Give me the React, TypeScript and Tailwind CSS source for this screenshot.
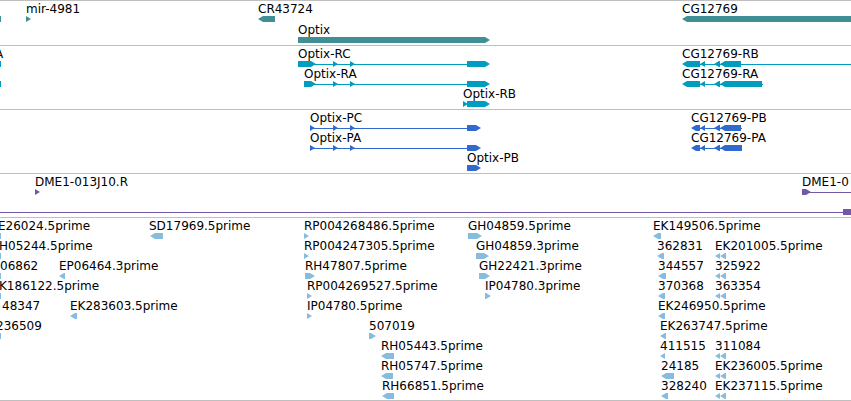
type Dir = "left" | "right" | "none";

interface Block {
  start: number;
  end: number;
  dir: Dir;
}

interface Feature {
  name?: string;
  x?: number;
  blocks: Block[];
  line?: [number, number | "100%"];
}

interface Track {
  id: string;
  title: string;
  fill: string;
  rowsClass: string;
  rows: Feature[][];
}

const right = (start: number, end: number): Block => ({ start, end, dir: "right" });
const left = (start: number, end: number): Block => ({ start, end, dir: "left" });
const box = (start: number, end: number): Block => ({ start, end, dir: "none" });

const feature = (
  name: string | undefined,
  x: number,
  blocks: Block[],
  line?: [number, number | "100%"],
): Feature => ({ name, x, blocks, line });

const edge = box(0, 1);
const pair = [left(715, 720), left(720, 726)];

/* Shapes that run past the right side of the window end here. */
const FAR = 4000;

const tracks: Track[] = [
  {
    id: "gene",
    title: "Genes",
    fill: "fill-[#408f94]",
    rowsClass: "gap-px pb-[3px]",
    rows: [
      [
        feature(undefined, 0, [edge]),
        feature("mir-4981", 26, [right(26, 31)]),
        feature("CR43724", 258, [left(258, 275)]),
        feature("CG12769", 682, [left(682, FAR)]),
      ],
      [feature("Optix", 298, [right(298, 490)])],
    ],
  },
  {
    id: "transcript",
    title: "Transcripts",
    fill: "fill-[#009dbf]",
    rowsClass: "pb-[3px]",
    rows: [
      [
        feature("A", -5, [edge]),
        feature("Optix-RC", 298, [right(298, 316), right(333, 338), right(350, 355), right(467, 490)], [310, 467]),
        feature("CG12769-RB", 682, [left(682, 700), left(700, 705), left(714, 720), left(720, 741)], [700, "100%"]),
      ],
      [
        feature(undefined, 0, [edge]),
        feature("Optix-RA", 304, [right(304, 316), right(333, 338), right(350, 355), right(467, 490)], [310, 467]),
        feature("CG12769-RA", 682, [left(682, 700), left(700, 705), left(714, 720), left(720, 762)], [700, 763]),
      ],
      [feature("Optix-RB", 463, [right(463, 468), right(467, 490)])],
    ],
  },
  {
    id: "protein",
    title: "Proteins",
    fill: "fill-[#316ace]",
    rowsClass: "pb-[3px]",
    rows: [
      [
        feature("Optix-PC", 310, [right(310, 315), right(333, 338), right(350, 355), right(467, 481)], [310, 467]),
        feature("CG12769-PB", 691, [left(691, 700), left(700, 705), left(714, 720), left(720, 741)], [700, 742]),
      ],
      [
        feature("Optix-PA", 310, [right(310, 315), right(333, 338), right(350, 355), right(467, 481)], [310, 467]),
        feature("CG12769-PA", 691, [left(691, 700), left(700, 705), left(714, 720), left(720, 742)], [700, 742]),
      ],
      [feature("Optix-PB", 467, [right(467, 481)])],
    ],
  },
  {
    id: "clone",
    title: "Clones",
    fill: "fill-[#7458a8]",
    rowsClass: "pb-[3px]",
    rows: [
      [
        feature("DME1-013J10.R", 35, [right(35, 40)]),
        feature("DME1-0", 802, [right(802, 811)], [805, "100%"]),
      ],
      [feature(undefined, 0, [box(843, FAR)], [0, "100%"])],
    ],
  },
  {
    id: "est",
    title: "Expressed sequence tags",
    fill: "fill-[#87bcde]",
    rowsClass: "pb-0.5",
    rows: [
      [
        feature("E26024.5prime", -2, [edge]),
        feature("SD17969.5prime", 149, [left(150, 163)]),
        feature("RP004268486.5prime", 304, [right(304, 309)]),
        feature("GH04859.5prime", 468, [right(468, 482)]),
        feature("EK149506.5prime", 653, [left(653, 661)]),
      ],
      [
        feature("H05244.5prime", -1, [edge]),
        feature("RP004247305.5prime", 304, [right(304, 309)]),
        feature("GH04859.3prime", 476, [right(476, 489)]),
        feature("362831", 657, [left(657, 664)]),
        feature("EK201005.5prime", 715, pair),
      ],
      [
        feature("06862", 0, [edge]),
        feature("EP06464.3prime", 59, [left(59, 65)]),
        feature("RH47807.5prime", 305, [right(305, 315)]),
        feature("GH22421.3prime", 479, [right(479, 490)]),
        feature("344557", 658, [left(658, 666)]),
        feature("325922", 715, pair),
      ],
      [
        feature("K186122.5prime", -1, [edge]),
        feature("RP004269527.5prime", 307, [right(307, 312)]),
        feature("IP04780.3prime", 485, [right(485, 491)]),
        feature("370368", 658, [left(658, 665)]),
        feature("363354", 715, pair),
      ],
      [
        feature("48347", 2, []),
        feature("EK283603.5prime", 70, [left(70, 77)]),
        feature("IP04780.5prime", 307, [right(307, 312)]),
        feature("EK246950.5prime", 658, [left(658, 665)]),
      ],
      [
        feature("236509", -4, [edge]),
        feature("507019", 369, [right(369, 376)]),
        feature("EK263747.5prime", 660, [left(660, 666)]),
      ],
      [
        feature("RH05443.5prime", 381, [left(381, 394)]),
        feature("411515", 660, [left(660, 665)]),
        feature("311084", 715, pair),
      ],
      [
        feature("RH05747.5prime", 381, [left(381, 393)]),
        feature("24185", 661, [left(661, 674)]),
        feature("EK236005.5prime", 715, pair),
      ],
      [
        feature("RH66851.5prime", 382, [left(382, 394)]),
        feature("328240", 661, [left(661, 668)]),
        feature("EK237115.5prime", 715, pair),
      ],
    ],
  },
];

/* A block is six pixels tall; its arrow head takes up to five pixels of its length. */
function outline({ start, end, dir }: Block): string {
  const head = Math.min(5, end - start);
  if (dir === "right") {
    return `${start},0 ${end - head},0 ${end},3 ${end - head},6 ${start},6`;
  }
  if (dir === "left") {
    return `${start},3 ${start + head},0 ${end},0 ${end},6 ${start + head},6`;
  }
  return `${start},0 ${end},0 ${end},6 ${start},6`;
}

function Glyphs({ features, fill }: { features: Feature[]; fill: string }) {
  return (
    <svg aria-hidden="true" className={`mt-[15px] block h-1.5 w-full shrink-0 ${fill}`}>
      {features.map((item, i) => (
        <g key={i}>
          {item.line && (
            <svg x={item.line[0]} width={item.line[1] === "100%" ? "100%" : item.line[1] - item.line[0]} height="6">
              <rect y="3" width="100%" height="1" />
            </svg>
          )}
          {item.blocks.map((block, j) => (
            <polygon key={j} points={outline(block)} />
          ))}
        </g>
      ))}
    </svg>
  );
}

function Row({ features, fill }: { features: Feature[]; fill: string }) {
  return (
    <li className="relative h-5">
      <div className="flex">
        <Glyphs features={features} fill={fill} />
      </div>
      {features.map(
        (item) =>
          item.name && (
            <span key={item.name} className="absolute top-0 whitespace-nowrap" style={{ left: item.x }}>
              {item.name}
            </span>
          ),
      )}
    </li>
  );
}

export default function App() {
  return (
    <main className="overflow-hidden border-b border-[#bfbfbf] bg-white font-['DejaVu_Sans',sans-serif] text-xs leading-4 text-black">
      {tracks.map((track) => (
        <section key={track.id} aria-label={track.title} className="border-t border-[#bfbfbf]">
          <ul className={`flex flex-col ${track.rowsClass}`}>
            {track.rows.map((features, i) => (
              <Row key={i} features={features} fill={track.fill} />
            ))}
          </ul>
        </section>
      ))}
    </main>
  );
}
